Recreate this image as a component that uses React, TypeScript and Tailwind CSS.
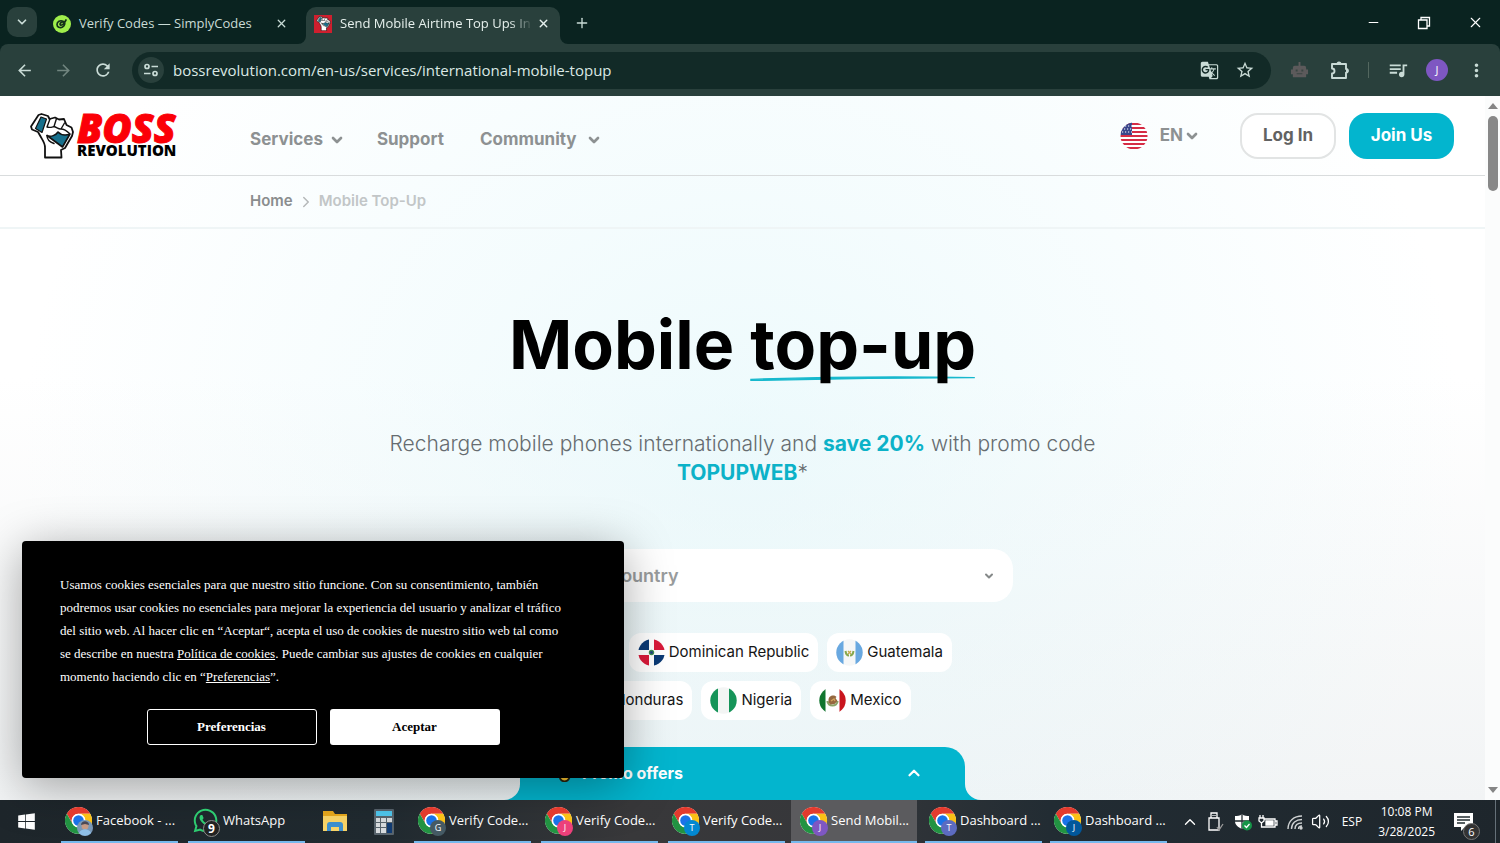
import React from "react";
import type { ReactNode } from "react";
import { ChevronDown, ChevronRight, ChevronUp, Minus, Plus, Volume2, X } from "lucide-react";
import { MdArrowBack, MdArrowForward, MdGTranslate, MdMoreVert, MdQueueMusic, MdRefresh, MdStarBorder } from "react-icons/md";
import { FaWhatsapp, FaWindows } from "react-icons/fa";

function ChromeLogo() {
  return (
    <svg viewBox="0 0 48 48" className="size-[27px]" aria-hidden="true">
      <circle cx="24" cy="24" r="24" fill="#fff" />
      <path d="M24 12h20.8A24 24 0 0 0 3.2 12l10.4 18A12 12 0 0 1 24 12z" fill="#e33b2e" />
      <path d="M34.4 30 24 48A24 24 0 0 0 44.8 12H24a12 12 0 0 1 10.4 18z" fill="#fbc116" />
      <path d="M13.6 30 3.2 12A24 24 0 0 0 24 48l10.4-18a12 12 0 0 1-20.8 0z" fill="#229342" />
      <circle cx="24" cy="24" r="12" fill="#fff" />
      <circle cx="24" cy="24" r="9.4" fill="#1a73e8" />
    </svg>
  );
}

function FistArt({ className }: { className: string }) {
  return (
    <svg viewBox="0 0 44 46" className={className} aria-hidden="true" strokeLinejoin="round" strokeLinecap="round">
      <path d="M15 44.500v-10c0-5-3-8-5-12L8 19l-6-2.500-1-3L8.500 2l3-1L18 3l1.500 3L25 4.500l4 2L34 6l2.500 6 5 2.500L43 19l-1 4-7 12-4 2 .5 7.500z" fill="#fff" stroke="#111" strokeWidth="1.800" />
      <path d="M11 4 16.500 6 12 19.500 5.500 15.500z" fill="#17708c" stroke="#111" strokeWidth="1.200" />
      <path d="M17 22.500c4 2 9-.5 11-3.500 3 3 7 4 12 2l-7.500 13z" fill="#17708c" stroke="#111" strokeWidth="1.600" />
      <path d="M17 14 20 6M24 13.500l2.500-8M31 16l3.500-6M17 14c3 1 5 0 7-.5 3 1 5 3 7 2.500 3 0 6 2 8.500 4.500M17 22.500c0 5 4 7 7 8" fill="none" stroke="#111" strokeWidth="1.400" />
    </svg>
  );
}

function BrowserChrome() {
  return (
    <div className="shrink-0 bg-[#0a2320] font-['Open_Sans',sans-serif] text-[#c9dbd6]">
      <div className="flex h-11 items-end pl-[7px]">
        <button aria-label="Search tabs" className="mb-[7px] grid size-[30px] place-items-center rounded-[10px] bg-[#29403c]">
          <ChevronDown className="size-[14px]" strokeWidth={3} />
        </button>
        <div className="flex h-[37px] w-[269px] items-center pb-1 pl-4 pr-[18px]">
          <svg viewBox="0 0 18 18" className="size-[18px] shrink-0" aria-hidden="true">
            <circle cx="9" cy="9" r="9" fill="#9fee4b" />
            <path d="M10.500 6.500C7 4.500 4 7 4 9.500s3 4 5.500 2.500 3-4.500 1-5S6 9 7.500 10s4-2 5.500-5" fill="none" stroke="#14301a" strokeWidth="1.700" strokeLinecap="round" />
          </svg>
          <span className="ml-2 flex-1 whitespace-nowrap text-[13px]">Verify Codes — SimplyCodes</span>
          <button aria-label="Close Verify Codes"><X className="size-[13px]" strokeWidth={2.4} /></button>
        </div>
        <div className="relative flex h-[37px] w-[254px] items-center rounded-t-[10px] bg-[#29403c] pb-1 pl-2 pr-[10px] text-[#e6f0ed]">
          <svg viewBox="0 0 8 8" className="absolute -left-2 bottom-0 size-2" aria-hidden="true"><path d="M8 0v8H0a8 8 0 0 0 8-8" fill="#29403c" /></svg>
          <svg viewBox="0 0 8 8" className="absolute -right-2 bottom-0 size-2" aria-hidden="true"><path d="M0 0v8h8a8 8 0 0 1-8-8" fill="#29403c" /></svg>
          <span className="grid size-[18px] shrink-0 place-items-center bg-[#cf1f2e]"><FistArt className="size-[15px]" /></span>
          <span className="ml-2 flex-1 overflow-hidden whitespace-nowrap text-[13px] [mask-image:linear-gradient(to_right,#000_88%,transparent)]">Send Mobile Airtime Top Ups In</span>
          <button aria-label="Close Send Mobile Airtime" className="ml-1"><X className="size-[13px]" strokeWidth={2.6} /></button>
        </div>
        <button aria-label="New tab" className="mb-[13px] ml-[14px]"><Plus className="size-4" /></button>
        <div className="ml-auto flex items-center gap-9 pb-[13px] pr-4 text-white">
          <button aria-label="Minimize"><Minus className="size-[15px]" strokeWidth={1.6} /></button>
          <button aria-label="Restore">
            <svg viewBox="0 0 14 14" className="size-[14px]" fill="none" stroke="currentColor" strokeWidth="1.300" aria-hidden="true"><path d="M1.500 4h8.500v8.500H1.500zM4 4V1.500h8.500V10H10" /></svg>
          </button>
          <button aria-label="Close window"><X className="size-[17px]" strokeWidth={1.6} /></button>
        </div>
      </div>
      <div className="flex h-[52px] items-center rounded-t-lg bg-[#29403c] pl-[15px] pr-[13px]">
        <button aria-label="Back"><MdArrowBack className="size-[19px]" /></button>
        <button aria-label="Forward" className="ml-5 text-[#71857f]"><MdArrowForward className="size-[19px]" /></button>
        <button aria-label="Reload" className="ml-5"><MdRefresh className="size-[20px]" /></button>
        <div className="ml-[19px] flex h-[37px] flex-1 items-center rounded-full bg-[#122a27] pl-[6px] pr-4">
          <button aria-label="Site information" className="grid size-[26px] place-items-center rounded-full bg-[#29403c]">
            <svg viewBox="0 0 16 16" className="size-4" fill="none" stroke="currentColor" strokeWidth="1.700" aria-hidden="true"><circle cx="4" cy="4.500" r="2" /><path d="M8.500 4.500H15M1 11.500h6.500" /><circle cx="12" cy="11.500" r="2" /></svg>
          </button>
          <input aria-label="Address" defaultValue="bossrevolution.com/en-us/services/international-mobile-topup" className="ml-[9px] min-w-0 flex-1 bg-transparent text-[15px] text-[#dbe8e4] outline-none" />
          <button aria-label="Translate this page"><MdGTranslate className="size-[19px]" /></button>
          <button aria-label="Bookmark" className="ml-4"><MdStarBorder className="size-[20px]" /></button>
        </div>
        <button aria-label="Robot extension" className="ml-[19px] text-[#5c5a5b]">
          <svg viewBox="0 0 20 20" className="size-[19px]" aria-hidden="true"><path d="M9 1h2v4h4a2 2 0 0 1 2 2v2h2v5h-2v3H3v-3H1V9h2V7a2 2 0 0 1 2-2h4z" fill="currentColor" /><path d="M6 9h2v2H6zm6 0h2v2h-2zm-5 4h6v1H7z" fill="#3a4643" /></svg>
        </button>
        <button aria-label="Extensions" className="ml-5">
          <svg viewBox="0 0 21 21" className="size-[21px]" aria-hidden="true"><path d="M3 4h14v5a1.800 1.800 0 0 1 0 3.600V18H3v-4.500a2.400 2.400 0 0 0 0-5z" fill="none" stroke="currentColor" strokeWidth="1.900" strokeLinejoin="round" /><path d="M7.500 4a2.500 2.500 0 0 1 5 0zM17 8.500a2.500 2.500 0 0 1 0 5z" fill="currentColor" /></svg>
        </button>
        <span className="ml-[18px] h-4 w-px bg-[#53675f]" />
        <button aria-label="Media controls" className="ml-[18px]"><MdQueueMusic className="size-[22px]" /></button>
        <button aria-label="Profile" className="ml-[17px] grid size-[22px] place-items-center rounded-full bg-[#7e57c2] text-[11px] text-white">J</button>
        <button aria-label="Browser menu" className="ml-[18px]"><MdMoreVert className="size-[21px]" /></button>
      </div>
    </div>
  );
}

function UsFlag() {
  return (
    <svg viewBox="0 0 28 28" className="size-7" aria-hidden="true">
      <clipPath id="us"><circle cx="14" cy="14" r="13.500" /></clipPath>
      <g clipPath="url(#us)">
        <path d="M0 0h28v28H0z" fill="#fff" />
        <path d="M0 2h28M0 6h28M0 10h28M0 14h28M0 18h28M0 22h28M0 26h28" stroke="#d52c45" strokeWidth="2" />
        <path d="M0 0h12v13H0z" fill="#39468c" />
        <path d="M2 4h10M1 7h11M2 10h10" stroke="#fff" strokeWidth="1.200" strokeDasharray="1.200 1.800" />
      </g>
    </svg>
  );
}

function RoundFlag({ id, children }: { id: string; children: ReactNode }) {
  return (
    <svg viewBox="0 0 27 27" className="size-[27px] shrink-0" aria-hidden="true">
      <clipPath id={id}><circle cx="13.500" cy="13.500" r="13.200" /></clipPath>
      <g clipPath={`url(#${id})`}>{children}</g>
    </svg>
  );
}

const countries: { name: string; flag: ReactNode }[] = [
  {
    name: "Cuba",
    flag: <><path d="M0 0h27v27H0z" fill="#fff" /><path d="M0 3h27M0 13.500h27M0 24h27" stroke="#0b4ea2" strokeWidth="5" /><path d="M0 0v27l15-13.500z" fill="#cf142b" /></>,
  },
  {
    name: "Dominican Republic",
    flag: (
      <>
        <path d="M0 0h27v27H0z" fill="#fff" />
        <path d="M0 0h11v11H0zM16 16h11v11H16z" fill="#0b3a75" />
        <path d="M16 0h11v11H16zM0 16h11v11H0z" fill="#d91a3a" />
        <circle cx="13.500" cy="13.500" r="2.700" fill="#3f8f52" />
        <path d="M12.300 12.300h2.400v2.400h-2.400z" fill="#1c3a83" />
      </>
    ),
  },
  {
    name: "Guatemala",
    flag: (
      <>
        <path d="M0 0h27v27H0z" fill="#f6f7f7" />
        <path d="M0 0h7.500v27H0zM19.500 0H27v27h-7.500z" fill="#69a8e0" />
        <path d="M9.500 12c.5 3.500 2 4.500 3.500 4.500M17.500 12c-.5 3.500-2 4.500-3.500 4.500" fill="none" stroke="#86a84f" strokeWidth="2" />
        <path d="m12 12 3 3m0-3-3 3" stroke="#c5a848" strokeWidth="1.200" />
      </>
    ),
  },
  {
    name: "Honduras",
    flag: <><path d="M0 0h27v27H0z" fill="#fff" /><path d="M0 0h27v8H0zM0 19h27v8H0z" fill="#18a0d8" /></>,
  },
  {
    name: "Nigeria",
    flag: <><path d="M0 0h27v27H0z" fill="#f3f5f4" /><path d="M0 0h8v27H0zM19 0h8v27h-8z" fill="#169459" /></>,
  },
  {
    name: "Mexico",
    flag: (
      <>
        <path d="M0 0h27v27H0z" fill="#fff" />
        <path d="M0 0h6.500v27H0z" fill="#10752f" />
        <path d="M20.500 0H27v27h-6.500z" fill="#c9151e" />
        <path d="M8.500 14c0 6 10 6 10 0" fill="none" stroke="#8ba468" strokeWidth="2.200" />
        <path d="M9.500 13c0-4 5-6 8-3l-1 1 2 3-3 3-4 .5-2-2z" fill="#96683f" />
        <path d="m12 14 3-2 1 2" fill="none" stroke="#d2a45d" strokeWidth="1.300" />
      </>
    ),
  },
];

function CountryRow({ from, to }: { from: number; to: number }) {
  return (
    <div className="flex justify-center gap-[9px]">
      {countries.slice(from, to).map((c, i) => (
        <button key={c.name} className="flex h-[39px] items-center gap-1 rounded-xl bg-white px-[9px] text-[15px] text-[#151515]">
          <RoundFlag id={`flag-${from + i}`}>{c.flag}</RoundFlag>
          {c.name}
        </button>
      ))}
    </div>
  );
}

function SiteHeader() {
  return (
    <header className="flex h-20 shrink-0 items-center border-b border-[#d9dcdd] pr-[31px] pl-[30px] text-[17px] font-bold text-[#8d9192]">
      <a href="#home" className="flex w-[220px] items-center gap-[3px]" aria-label="Boss Revolution">
        <FistArt className="h-[46px] w-[44px]" />
        <span className="flex flex-col whitespace-nowrap font-['Open_Sans',sans-serif]">
          <span className="text-[40px] leading-[30px] font-extrabold text-[#fb0007] italic [-webkit-text-stroke:1px_#fb0007]">BOSS</span>
          <span className="text-[15px] leading-[15px] font-extrabold text-black">REVOLUTION</span>
        </span>
      </a>
      <nav className="flex items-center gap-8 pt-2">
        <a href="#services" className="flex items-center gap-[6px]">Services <ChevronDown className="size-4" strokeWidth={4} /></a>
        <a href="#support">Support</a>
        <a href="#community" className="ml-1 flex items-center gap-[9px]">Community <ChevronDown className="size-4" strokeWidth={4} /></a>
      </nav>
      <div className="ml-auto flex items-center">
        <button className="flex items-center"><UsFlag /><span className="ml-3">EN</span><ChevronDown className="ml-px size-4" strokeWidth={4} /></button>
        <button className="ml-10 h-[46px] w-24 rounded-[18px] border-2 border-[#e2e4e4] bg-white text-[#626262]">Log In</button>
        <button className="ml-[13px] h-[46px] w-[105px] rounded-[18px] bg-[#03b5ce] text-white">Join Us</button>
      </div>
    </header>
  );
}

function PromoOffers() {
  return (
    <div className="relative mx-auto mt-[27px] w-[445px] flex-1 rounded-t-[20px] bg-[#03b5ce]">
      <svg viewBox="0 0 16 16" className="absolute -left-4 bottom-0 size-4" aria-hidden="true"><path d="M16 0v16H0A16 16 0 0 0 16 0" fill="#03b5ce" /></svg>
      <svg viewBox="0 0 16 16" className="absolute -right-4 bottom-0 size-4" aria-hidden="true"><path d="M0 0v16h16A16 16 0 0 1 0 0" fill="#03b5ce" /></svg>
      <button className="flex h-[52px] w-full items-center pr-[42px] pl-9 text-[16px] font-bold text-white">
        <svg viewBox="0 0 18 20" className="size-[18px]" aria-hidden="true"><path d="M5 11V3c0-2 3-2 3 0v5l5 1 2 4-2 4c-2 3-7 3-9 0l-2-5z" fill="#fbc531" stroke="#2b240c" strokeWidth="2" /></svg>
        <span className="ml-2">Promo offers</span>
        <ChevronUp className="ml-auto size-[18px]" strokeWidth={3} />
      </button>
    </div>
  );
}

function CookieNotice() {
  return (
    <section aria-label="Cookies" className="absolute bottom-[22px] left-[22px] w-[602px] rounded bg-black px-[38px] pt-8 pb-[33px] font-['Liberation_Serif',serif] text-[13px] text-white shadow-[0_8px_48px_rgba(0,0,0,0.35)]">
      <p className="leading-[23px]">
        Usamos cookies esenciales para que nuestro sitio funcione. Con su consentimiento, también
        <br />podremos usar cookies no esenciales para mejorar la experiencia del usuario y analizar el tráfico
        <br />del sitio web. Al hacer clic en “Aceptar“, acepta el uso de cookies de nuestro sitio web tal como
        <br />se describe en nuestra <a href="#cookies" className="underline">Política de cookies</a>. Puede cambiar sus ajustes de cookies en cualquier
        <br />momento haciendo clic en “<a href="#preferencias" className="underline">Preferencias</a>”.
      </p>
      <div className="mt-[21px] flex justify-center gap-[13px] font-bold">
        <button className="h-9 w-[170px] rounded-[3px] border border-white">Preferencias</button>
        <button className="h-9 w-[170px] rounded-[3px] bg-white text-black">Aceptar</button>
      </div>
    </section>
  );
}

function Page() {
  return (
    <div className="relative flex min-h-0 flex-1 bg-white font-['Inter',sans-serif]">
      <div className="flex min-w-0 flex-1 flex-col overflow-hidden bg-[radial-gradient(ellipse_720px_640px_at_50%_50%,rgba(222,246,250,0.55),rgba(255,255,255,0)),linear-gradient(to_bottom,#ffffff_40%,#f2f4f5_100%)]">
        <SiteHeader />
        <nav aria-label="Breadcrumb" className="flex h-[53px] shrink-0 items-center gap-1 border-b-2 border-[#eff5f6] pl-[250px] text-[15px] font-semibold">
          <a href="#home" className="text-[#8a8d8e]">Home</a>
          <ChevronRight className="size-[18px] text-[#b5b8b9]" />
          <span className="text-[#c2c6c7]">Mobile Top-Up</span>
        </nav>
        <main className="flex min-h-0 flex-1 flex-col text-center">
          <h1 className="mt-[71px] text-[68px] leading-[88px] font-bold text-black">
            Mobile{" "}
            <span className="relative inline-block">
              <svg viewBox="0 0 226 6" preserveAspectRatio="none" className="absolute bottom-[7px] left-0 h-[5px] w-full" aria-hidden="true"><path d="M1 4Q113-.5 225 2 113 2.500 1 5.500z" fill="#16b8cd" stroke="#16b8cd" strokeWidth="1.500" /></svg>
              <span className="relative">top-up</span>
            </span>
          </h1>
          <p className="mx-auto mt-[41px] max-w-[740px] text-[21px] leading-[29px] font-light text-[#666c70]">
            Recharge mobile phones internationally and <b className="font-bold text-[#0cb2c8]">save 20%</b> with promo code
            <br /><b className="font-bold text-[#0cb2c8]">TOPUPWEB</b>*
          </p>
          <div className="relative mx-auto mt-[62px] w-[540px]">
            <select aria-label="Choose a country" className="h-[53px] w-full appearance-none rounded-[20px] bg-white pl-[52px] text-[18px] font-semibold text-[#999c9d]">
              <option>Choose a country</option>
            </select>
            <ChevronDown className="pointer-events-none absolute top-[21px] right-[18px] size-3 text-[#858989]" strokeWidth={4} />
          </div>
          <div className="mt-[31px] flex flex-col gap-[9px]">
            <CountryRow from={0} to={3} />
            <CountryRow from={3} to={6} />
          </div>
          <PromoOffers />
        </main>
      </div>
      <div className="flex w-[15px] shrink-0 flex-col items-center bg-[#fbfcfc] py-[7px]" aria-hidden="true">
        <svg viewBox="0 0 10 6" className="h-[6px] w-[10px]"><path d="m0 6 5-6 5 6z" fill="#858585" /></svg>
        <span className="mt-[7px] h-[75px] w-[10px] rounded-full bg-[#888]" />
        <svg viewBox="0 0 10 6" className="mt-auto h-[6px] w-[10px]"><path d="m0 0 5 6 5-6z" fill="#858585" /></svg>
      </div>
      <CookieNotice />
    </div>
  );
}

function TaskButton({ label, badge, icon, active }: { label: string; badge?: ReactNode; icon?: ReactNode; active?: boolean }) {
  return (
    <button
      className={
        active
          ? "flex h-full w-[126px] items-center border-b-2 border-[#76b9ed] bg-[#5b5b5e] pl-[9px]"
          : "flex h-full w-[117px] items-center border-b-2 border-[#76b9ed] pl-1"
      }
    >
      <span className="relative mr-1 shrink-0">
        {icon ?? <ChromeLogo />}
        {badge}
      </span>
      <span className="whitespace-nowrap">{label}</span>
    </button>
  );
}

const badgeBase = "absolute -right-[1px] -bottom-[2px] grid size-4 place-items-center rounded-full text-[9px] text-white";

function Taskbar() {
  return (
    <footer className="flex h-[43px] shrink-0 items-center bg-[linear-gradient(to_right,#1e262b_0%,#202a30_25%,#38383a_42%,#36373a_55%,#222c33_70%,#1e262c_100%)] font-['Open_Sans',sans-serif] text-[13px] text-white">
      <button aria-label="Start" className="ml-[17px] mr-[25px]"><FaWindows className="size-[19px]" /></button>
      <TaskButton
        label="Facebook - ..."
        badge={
          <svg viewBox="0 0 16 16" className="absolute -right-[1px] -bottom-[2px] size-4" aria-hidden="true"><circle cx="8" cy="8" r="8" fill="#7898b8" /><circle cx="8" cy="6" r="3.500" fill="#c69b85" /><path d="M4 5c0-5 8-5 8 0L8 4z" fill="#4b4854" /><path d="M2 13c2-5 10-5 12 0a8 8 0 0 1-12 0" fill="#8fc0e8" /></svg>
        }
      />
      <span className="w-[10px]" />
      <TaskButton
        label="WhatsApp"
        icon={<FaWhatsapp className="size-[27px] text-[#2ecc71]" />}
        badge={<span className="absolute -right-[1px] -bottom-[3px] grid size-[17px] place-items-center rounded-full border border-[#8c8c8c] bg-[#222] text-[12px] leading-none font-bold">9</span>}
      />
      <button aria-label="File Explorer" className="ml-[18px]">
        <svg viewBox="0 0 24 21" className="h-[21px] w-6" aria-hidden="true"><path d="M0 0h10l2 3h12v17H0z" fill="#e9a91d" /><path d="M0 5h24v15H0z" fill="#fbd668" /><path d="M4 20v-6q0-3 3-3h10q3 0 3 3v6h-4v-4H8v4z" fill="#3d91d1" /></svg>
      </button>
      <button aria-label="Calculator" className="ml-[27px] mr-[20px]">
        <svg viewBox="0 0 20 26" className="h-[26px] w-5" aria-hidden="true"><rect width="20" height="26" rx="1" fill="#58646d" /><path d="M2 2h16v5H2z" fill="#50c8ef" /><path d="M2 9h4v4H2zm5 0h5v4H7zm6 0h5v4h-5zM2 14h4v4H2zm5 0h5v4H7zm-5 5h4v5H2zm5 0h5v5H7z" fill="#d8dcdf" /><path d="M13 14h5v10h-5z" fill="#123c73" /></svg>
      </button>
      <div className="flex h-full gap-[10px]">
        <TaskButton label="Verify Code..." badge={<span className={`${badgeBase} bg-[#455a64]`}>G</span>} />
        <TaskButton label="Verify Code..." badge={<span className={`${badgeBase} bg-[#ec407a]`}>J</span>} />
        <TaskButton label="Verify Code..." badge={<span className={`${badgeBase} bg-[#0288d1]`}>T</span>} />
      </div>
      <div className="ml-[6px] flex h-full gap-2">
        <TaskButton label="Send Mobil..." active badge={<span className={`${badgeBase} bg-[#7e57c2]`}>J</span>} />
        <TaskButton label="Dashboard ..." badge={<span className={`${badgeBase} bg-[#5c6bc0]`}>T</span>} />
        <TaskButton label="Dashboard ..." badge={<span className={`${badgeBase} bg-[#01579b]`}>J</span>} />
      </div>
      <div className="ml-auto flex items-center">
        <ChevronUp className="size-[18px]" strokeWidth={1.8} />
        <svg viewBox="0 0 18 20" className="ml-2 h-5 w-[18px]" fill="none" stroke="#fff" strokeWidth="1.300" aria-hidden="true"><path d="M4 6V1h6v5M2 6h10v12H2zM6 3v1M8 3v1" /><path d="m10 15 2 3 4-6" stroke="#999" /></svg>
        <svg viewBox="0 0 18 18" className="ml-[9px] size-[18px]" aria-hidden="true"><path d="M8 1c2 2 5 2 7 2v5c0 4-3 6-7 8-4-2-7-4-7-8V3c2 0 5 0 7-2z" fill="#fff" /><path d="M8 1v15M1 8h14" stroke="#222c30" strokeWidth="1.300" /><circle cx="13" cy="12.500" r="5" fill="#159447" /><path d="m10.500 12.500 2 2 3-3.500" fill="none" stroke="#fff" strokeWidth="1.300" /></svg>
        <svg viewBox="0 0 20 16" className="ml-[6px] h-4 w-5" fill="none" stroke="#fff" strokeWidth="1.300" aria-hidden="true"><path d="M6 5h11v8H6M17 7h2v4h-2" /><path d="M8 7h7v4H8z" fill="#fff" /><path d="M2 1v3M5 1v3M1 4h5v3L3.500 9 1 7zM3.500 9v4H6" /></svg>
        <svg viewBox="0 0 18 18" className="ml-2 size-[18px]" fill="none" stroke="#cfd2d3" strokeWidth="1.400" aria-hidden="true"><path d="M2 16C2 8 8 3 16 3M5.500 16C5.500 10 10 6.500 16 6.500M9 16c0-4 3-6 7-6M12.500 16c0-2 1-3 3.500-3" /><circle cx="15" cy="15" r="1" fill="#fff" /></svg>
        <Volume2 className="ml-[7px] size-[19px]" strokeWidth={1.6} />
        <span className="ml-3 text-[12px]">ESP</span>
        <div className="ml-[16px] text-center text-[12px] leading-5"><div>10:08 PM</div><div>3/28/2025</div></div>
        <button aria-label="Notifications" className="relative mr-[22px] ml-[19px]">
          <svg viewBox="0 0 19 20" className="h-5 w-[19px]" aria-hidden="true"><path d="M0 1h19v14h-8l-4 4v-4H0z" fill="#fff" /><path d="M3 5h13M3 8h13M3 11h8" stroke="#222c30" strokeWidth="1.300" /></svg>
          <span className="absolute -right-[7px] -bottom-[8px] grid size-[17px] place-items-center rounded-full border border-[#777] bg-[#333] text-[11px] leading-none">6</span>
        </button>
        <span className="h-[43px] w-px bg-[#657078]" />
        <span className="w-1" />
      </div>
    </footer>
  );
}

export default function App() {
  return (
    <div className="flex h-screen flex-col overflow-hidden">
      <BrowserChrome />
      <Page />
      <Taskbar />
    </div>
  );
}
